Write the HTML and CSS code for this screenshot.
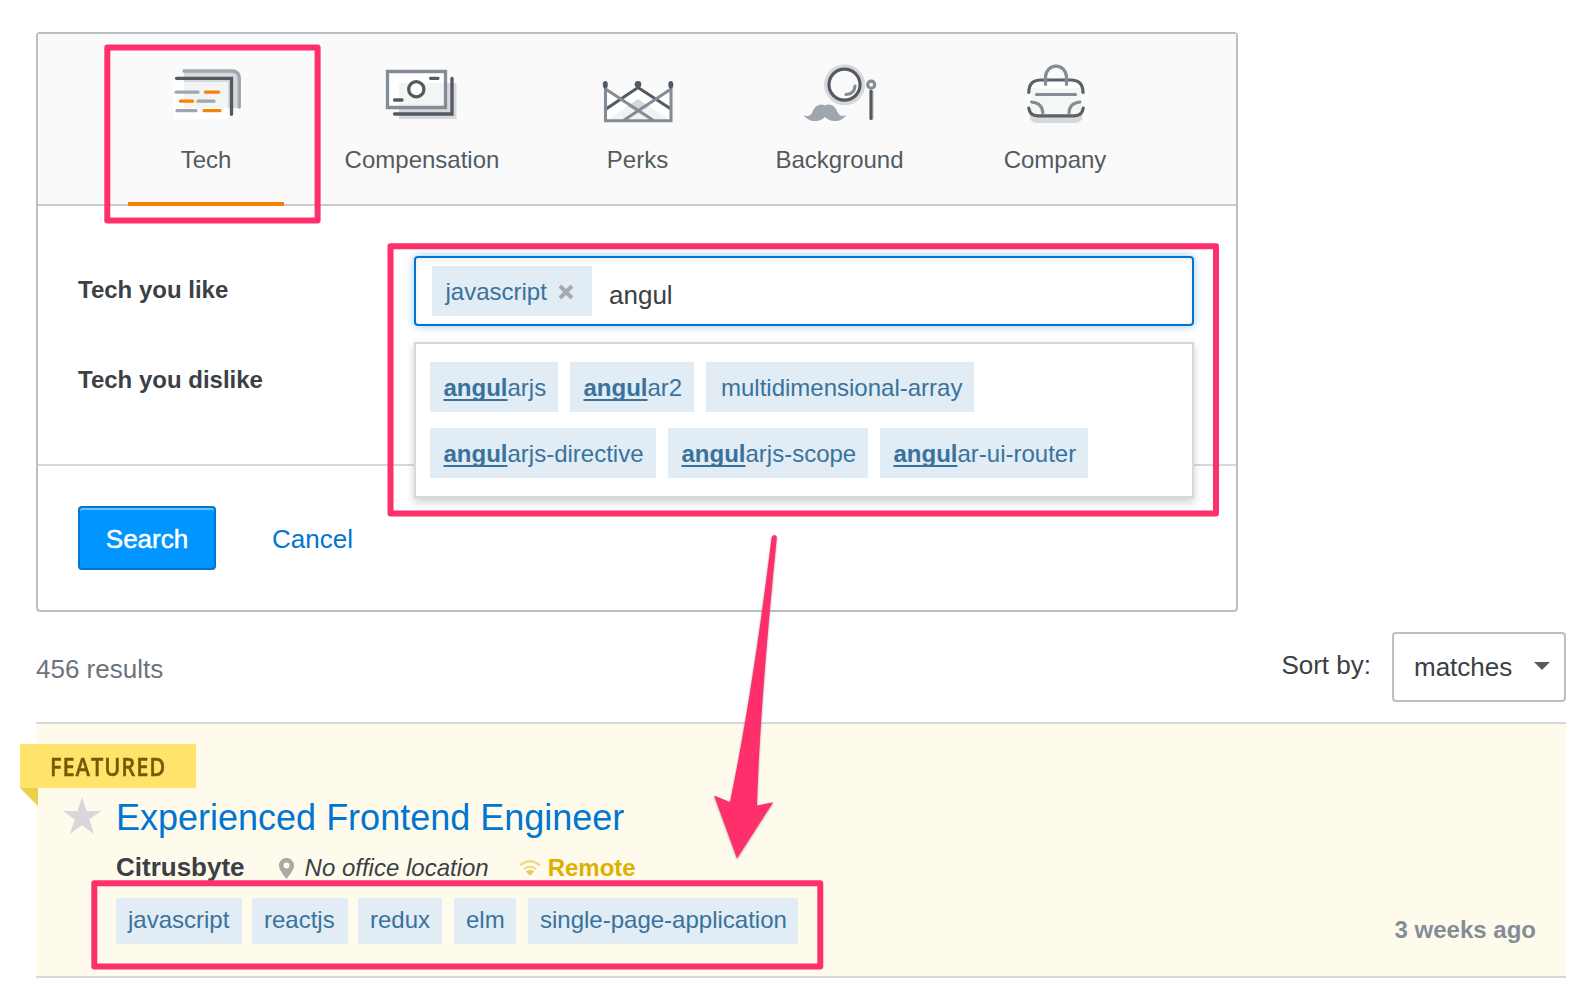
FILE: index.html
```html
<!DOCTYPE html>
<html lang="en">
<head>
<meta charset="utf-8">
<title>Job search</title>
<link rel="stylesheet" href="styles.css">
</head>
<body>
<section class="panel">
  <nav class="tabs">
    <a class="tab tab-active">
      <svg class="tab-icon" viewBox="161 60 90 66" fill="none" stroke-width="3.300" stroke-linecap="round">
        <path d="M184 72h48q7 0 7 7v29h-55z" fill="#d6d8db"/>
        <path d="M173 82h55v37h-55z" fill="#fff"/>
        <path d="M184 82h44v26h-44z" fill="#f3f5f5"/>
        <path d="M184 71h48q7.300 0 7.300 8v28" stroke="#9fa6ad"/>
        <path d="M176.500 78.300h55v36" stroke="#535a60"/>
        <path d="M176 92.200h22M198 101.200h16M177 110.700h19" stroke="#9fa6ad"/>
        <path d="M205.500 92.200h13M180.500 101.200h12M204 110.700h16" stroke="#f98000"/>
      </svg>
      <span>Tech</span>
    </a>
    <a class="tab">
      <svg class="tab-icon" viewBox="377 60 90 66" fill="none" stroke-width="3.300" stroke-linecap="round">
        <path d="M399 83h57.500v36H399z" fill="#d6d8db"/>
        <path d="M387.500 71.500h58v36h-58z" fill="#fff"/>
        <path d="M399 83h45v23h-45z" fill="#f3f5f5"/>
        <path d="M387.500 71.500h58v36h-58z" stroke="#848d95"/>
        <path d="M394.500 114H452V78.500M430.500 78.300h7.500M394.500 100h7.500" stroke="#535a60"/>
        <circle cx="416.300" cy="89.300" r="7.600" fill="#fff" stroke="#535a60"/>
      </svg>
      <span>Compensation</span>
    </a>
    <a class="tab">
      <svg class="tab-icon" viewBox="593 60 90 66" fill="none" stroke-width="3.100">
        <path d="M605.500 89l15 10L638 88l17 11 16-10v32h-65.500z" fill="#fff"/>
        <path d="M606 121l32-22 33 22z" fill="#f1f3f3"/>
        <path d="M627 106.500l11-7.500 11 7.500-11 5.500z" fill="#d6d8db"/>
        <path d="M606 109l32-21.500 33 21.500" stroke="#535a60"/>
        <path d="M605.500 86v34.700H671V86M605.500 89l48 31.500M671 89l-47.500 31.500" stroke="#848d95"/>
        <g fill="#535a60"><circle cx="638" cy="84.300" r="3.300"/><ellipse cx="605.300" cy="84.700" rx="2.500" ry="3.700"/><ellipse cx="670.800" cy="84.700" rx="2.500" ry="3.700"/></g>
      </svg>
      <span>Perks</span>
    </a>
    <a class="tab">
      <svg class="tab-icon" viewBox="794.500 60 90 66" fill="none" stroke-width="3.200" stroke-linecap="round">
        <circle cx="844" cy="84.700" r="20.500" fill="#d6d8db"/>
        <circle cx="844" cy="84.700" r="15.500" fill="#fafafa" stroke="#535a60"/>
        <path d="M845.500 94.500q8.500-.5 9-8.500" stroke="#848d95"/>
        <path d="M872.300 91v28" stroke="#d6d8db" stroke-width="2"/>
        <path d="M870.500 91v27.500" stroke="#535a60"/>
        <circle cx="870.700" cy="84.700" r="3.500" fill="#fff" stroke="#848d95"/>
        <path d="M803 115c4 2.500 7.500.5 9-3 2-6 7.500-9.500 12.500-6.500 5-3 10.500.5 12.500 6.500 1.500 3.500 5 5.500 9 3-3 4-7.500 6.500-12 6-4.500 0-7.500-2-9.500-4-2 2-5 4-9.500 4-4.500.5-9-2-12-6z" fill="#9fa6ad"/>
      </svg>
      <span>Background</span>
    </a>
    <a class="tab">
      <svg class="tab-icon" viewBox="1010 60 90 66" fill="none" stroke-width="3.200" stroke-linecap="round">
        <path d="M1029.500 110h53v5q0 8-8 8h-37q-8 0-8-8z" fill="#d6d8db"/>
        <path d="M1029 92q0-12 12-12h30q12 0 12 12v16q-1 8-9 8h-36q-8 0-9-8z" fill="#fff"/>
        <path d="M1031 88h50v20q-1 7-8 7h-34q-7 0-8-7z" fill="#f5f7f7"/>
        <path d="M1028.800 92.500q0-12.500 12-12.500h30q12.200 0 12.200 12.500M1028.800 108q1 7.800 9 7.800h36.400q8 0 9-7.800" stroke="#5c6166"/>
        <path d="M1045.500 84.500V77a10.500 10.800 0 0 1 21 0v7.500M1036.500 94.500H1075.500M1031.500 102q11 1 11.300 11M1080 102q-10.800 1-11 11" stroke="#848d95"/>
      </svg>
      <span>Company</span>
    </a>
  </nav>
  <div class="form">
    <div class="row">
      <label>Tech you like</label>
      <div class="field">
        <div class="tag-input">
          <span class="tag tag-selected">javascript
            <svg class="remove" viewBox="0 0 16 16"><path d="M2 2l12 12M14 2L2 14"/></svg>
          </span>
          <span class="typed">angul</span>
        </div>
        <div class="suggestions">
          <div class="suggestion-row first">
            <span class="tag"><b>angul</b>arjs</span>
            <span class="tag"><b>angul</b>ar2</span>
            <span class="tag">multidimensional-array</span>
          </div>
          <div class="suggestion-row second">
            <span class="tag"><b>angul</b>arjs-directive</span>
            <span class="tag"><b>angul</b>arjs-scope</span>
            <span class="tag"><b>angul</b>ar-ui-router</span>
          </div>
        </div>
      </div>
    </div>
    <div class="row">
      <label>Tech you dislike</label>
    </div>
  </div>
  <div class="actions">
    <button class="search">Search</button>
    <a class="cancel">Cancel</a>
  </div>
</section>

<div class="results-bar">
  <span class="count">456 results</span>
  <span class="sort-label">Sort by:</span>
  <div class="select"><span>matches</span><i class="caret"></i></div>
</div>

<article class="job">
  <div class="ribbon"><span>FEATURED</span></div>
  <svg class="star" viewBox="0 0 38 38"><path d="M19 0l4.600 14H38L26.300 22.500 31 37 19 28.200 7 37l4.700-14.500L0 14h14.400z"/></svg>
  <div class="job-body">
    <h2>Experienced Frontend Engineer</h2>
    <div class="meta">
      <strong>Citrusbyte</strong>
      <span class="location">
        <svg class="pin" viewBox="0 0 15 21"><path fill-rule="evenodd" d="M7.500 0A7.300 7.300 0 0 1 15 7.500C15 12 11 16 7.500 21 4 16 0 12 0 7.500A7.300 7.300 0 0 1 7.500 0zm0 4.500a3 3 0 1 0 0 6 3 3 0 0 0 0-6z"/></svg>
        <em>No office location</em>
      </span>
      <span class="remote">
        <svg class="wifi" viewBox="0 0 22 16"><path d="M1 5.500Q11-3 21 5.500M5 9.200q6-5 12 0" fill="none" stroke="#f0d987" stroke-width="2.200"/><path d="M6.800 11.500q4.200-3.500 8.400 0L11 15.700z" fill="#e9cb5c"/></svg>
        <b>Remote</b>
      </span>
    </div>
    <div class="job-tags">
      <span class="tag">javascript</span>
      <span class="tag">reactjs</span>
      <span class="tag">redux</span>
      <span class="tag wide-gap">elm</span>
      <span class="tag wide-gap">single-page-application</span>
    </div>
  </div>
  <time>3 weeks ago</time>
</article>

<svg class="annotations" viewBox="0 0 1586 1002">
  <g fill="none" stroke="#ff2f6c" stroke-width="6" stroke-linejoin="round">
    <rect x="107.300" y="47.400" width="210.300" height="173.200"/>
    <rect x="390.500" y="246.200" width="825.500" height="267.200"/>
    <rect x="94.300" y="883.200" width="726" height="83.200"/>
  </g>
  <path class="arrow" d="M771.600 537.500q.5-2.500 2.700-2.500t2.500 2.800Q760 705 757 805.500l16.200-3.300L737 858.500 714 795.500l16 6.500Q752 696 771.600 537.500z"/>
</svg>
</body>
</html>
```
FILE: styles.css
```css
* { box-sizing: border-box; }
body {
  margin: 0;
  padding: 32px 20px 0 36px;
  height: 1002px;
  overflow: hidden;
  position: relative;
  background: #fff;
  color: #3b4045;
  font: 24px/28px "Liberation Sans", Arial, sans-serif;
}
svg { display: block; }

.panel {
  width: 1202px;
  height: 580px;
  border: 2px solid #bbc0c4;
  border-radius: 4px;
}
.tabs {
  display: grid;
  grid-template-columns: 216px 216px 215px 189px 242px;
  height: 172px;
  padding-left: 60px;
  background: #fafafb;
  border-bottom: 2px solid #c8ccd0;
}
.tab {
  position: relative;
  display: flex;
  flex-direction: column;
  align-items: center;
  gap: 20px;
  padding-top: 26px;
  color: #535a60;
}
.tab-icon { width: 90px; height: 66px; }
.tab-active::after {
  content: "";
  position: absolute;
  left: 30px;
  bottom: -2px;
  width: 156px;
  height: 4px;
  background: #f98000;
}

.form {
  height: 260px;
  padding: 50px 40px 0;
  border-bottom: 2px solid #d6d9dc;
}
.row {
  display: grid;
  grid-template-columns: 336px 780px;
  height: 90px;
}
.row label { padding-top: 20px; font-weight: bold; }
.field { position: relative; }
.tag-input {
  display: flex;
  align-items: flex-start;
  gap: 17px;
  height: 70px;
  padding: 8px 16px;
  border: 2px solid #0075d2;
  border-radius: 4px;
  box-shadow: 0 0 8px rgba(0, 120, 215, .4), inset 0 2px 6px rgba(0, 0, 0, .08);
}
.tag {
  display: block;
  height: 50px;
  padding: 12px 0 0 13.5px;
  background: #e1ecf4;
  color: #39739d;
  white-space: nowrap;
}
.tag b { text-decoration: underline; text-decoration-thickness: 2px; text-underline-offset: 3px; text-decoration-skip-ink: none; }
.tag-selected { display: flex; width: 160px; gap: 11px; }
.remove { width: 16px; height: 16px; margin-top: 6px; }
.remove path { stroke: #a8aaac; stroke-width: 4; }
.typed { padding-top: 14px; font-size: 26px; line-height: 30px; }
.suggestions {
  position: absolute;
  top: 86px;
  left: 0;
  width: 780px;
  height: 156px;
  padding: 18px 14px;
  background: #fff;
  border: 2px solid #d6d9dc;
  box-shadow: 0 4px 8px rgba(12, 13, 14, .2);
}
.suggestion-row { display: grid; column-gap: 12px; margin-bottom: 16px; }
.first { grid-template-columns: 128px 124px 268px; }
.second { grid-template-columns: 226px 200px 208px; }
.first .tag:last-child { padding-left: 15px; }

.actions {
  display: flex;
  align-items: center;
  gap: 56px;
  padding: 40px 40px 0;
  font-size: 26px;
  line-height: 30px;
}
.search {
  width: 138px;
  height: 64px;
  padding: 2px 0 0;
  border: 2px solid #0075d2;
  border-radius: 4px;
  background: #0095ff;
  box-shadow: inset 0 2px 0 #66bfff;
  color: #fff;
  font: inherit;
  -webkit-text-stroke: .5px #fff;
}
.cancel { padding-top: 2px; color: #0075d2; }

.results-bar {
  display: flex;
  align-items: flex-start;
  height: 110px;
  padding-top: 20px;
  font-size: 26px;
  line-height: 30px;
}
.count { flex: 1; padding-top: 22px; color: #6a737c; }
.sort-label { padding-top: 18px; margin-right: 21px; }
.select {
  display: flex;
  justify-content: space-between;
  width: 174px;
  height: 70px;
  padding: 18px 14px 0 20px;
  border: 2px solid #bbc0c4;
  border-radius: 4px;
}
.caret {
  width: 16px;
  height: 8px;
  margin-top: 10px;
  background: #535a60;
  clip-path: polygon(0 0, 100% 0, 50% 100%);
}

.job {
  position: relative;
  display: flex;
  height: 256px;
  padding-left: 27px;
  border: solid #d6d9dc;
  border-width: 2px 0;
  background: #fffbec;
}
.ribbon {
  position: absolute;
  left: -16px;
  top: 20px;
  width: 176px;
  height: 44px;
  padding: 5px 0 0 30px;
  background: #ffe36b;
  color: #735c00;
  font: 600 25px/34px "Open Sans", sans-serif;
  -webkit-text-stroke: .4px #735c00;
}
.ribbon span { display: inline-block; letter-spacing: 1px; transform: scaleX(.875); transform-origin: left; }
.ribbon::after {
  content: "";
  position: absolute;
  left: 0;
  top: 44px;
  width: 18px;
  height: 18px;
  background: #edd04a;
  clip-path: polygon(0 0, 100% 0, 100% 100%);
}
.star { width: 38px; height: 38px; margin-top: 73px; fill: #dbd6db; }
.job-body { flex: 1; padding: 73px 0 0 15px; }
.job h2 { margin: 0 0 13px; font-weight: normal; font-size: 36px; line-height: 42px; color: #0075d2; }
.meta { display: flex; align-items: flex-start; height: 30px; margin-bottom: 16px; }
.meta strong { font-size: 26px; line-height: 30px; }
.location, .remote { display: flex; align-items: center; padding-top: 2px; }
.location { margin-left: 34px; }
.pin { width: 15px; height: 21px; margin-right: 11px; fill: #a8aaa4; }
.remote { margin-left: 30px; color: #dcb000; }
.wifi { width: 22px; height: 16px; margin-right: 7px; }
.job-tags { display: grid; grid-template-columns: 126px 96px 84px 64px 272px; column-gap: 10px; }
.job-tags .tag { height: 46px; padding: 8px 0 0 12px; }
.wide-gap { margin-left: 2px; }
.job time { padding: 192px 30px 0 0; color: #848d95; font-weight: bold; }

.annotations { position: absolute; left: 0; top: 0; width: 1586px; height: 1002px; pointer-events: none; }
.arrow { fill: #ff2f6c; filter: drop-shadow(0 1px 1px rgba(0, 0, 0, .35)); }
```
